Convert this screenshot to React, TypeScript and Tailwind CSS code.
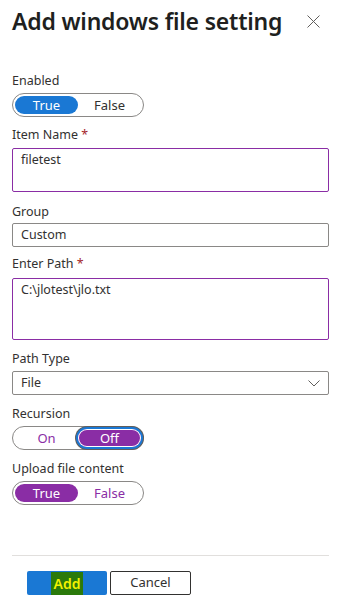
import React from "react";

const FONT = "font-['Noto_Sans',sans-serif]";

function Label({ text, required, className = "" }: { text: string; required?: boolean; className?: string }) {
  return (
    <div className={`text-[12.5px] leading-[18px] text-[#323130] ${className}`}>
      {text}
      {required && <span className="text-[#a4262c]"> *</span>}
    </div>
  );
}

function Toggle({
  left,
  right,
  active,
  tone,
  focused,
  className = "",
}: {
  left: string;
  right: string;
  active: "left" | "right";
  tone: "blue" | "purple";
  focused?: boolean;
  className?: string;
}) {
  const fill = tone === "blue" ? "bg-[#1a78d4]" : "bg-[#8a2da5]";
  const idle = tone === "blue" ? "text-[#323130]" : "text-[#8a2da5]";
  const pill = (label: string, on: boolean) => (
    <div
      className={`flex-1 h-[18px] rounded-full flex items-center justify-center text-[13px] leading-[18px] ${
        on ? `${fill} text-white` : idle
      } ${on && focused ? "shadow-[inset_0_0_0_1px_#ffffff,0_0_0_2px_#1a78d4,0_0_0_3px_#605e5c]" : ""}`}
    >
      {label}
    </div>
  );
  return (
    <div className={`w-[132px] h-[24px] rounded-full border border-[#8a8886] p-[2px] flex ${className}`}>
      {pill(left, active === "left")}
      {pill(right, active === "right")}
    </div>
  );
}

export default function App() {
  return (
    <div className={`w-[338px] h-[616px] bg-white ${FONT} pl-[12px] pr-[9px] flex flex-col`}>
      {/* Header */}
      <div className="flex items-start justify-between pt-[5px]">
        <h1 className="text-[23px] leading-[32px] font-semibold text-[#201f1e] tracking-[-0.2px]">
          Add windows file setting
        </h1>
        <svg width="13" height="13" viewBox="0 0 13 13" className="mt-[10px] mr-[9px]">
          <path d="M0.5 0.5 L12.5 12.5 M12.5 0.5 L0.5 12.5" stroke="#605e5c" strokeWidth="1" />
        </svg>
      </div>

      <Label text="Enabled" className="mt-[35px]" />
      <Toggle left="True" right="False" active="left" tone="blue" className="mt-[3px]" />

      <Label text="Item Name" required className="mt-[9px]" />
      <div className="mt-[4px] h-[44px] border border-[#8a2da5] rounded-[2px] px-[8px] pt-[2px] text-[12.5px] leading-[18px] text-[#323130]">
        filetest
      </div>

      <Label text="Group" className="mt-[11px]" />
      <div className="mt-[2px] h-[24px] border border-[#8a8886] rounded-[2px] px-[8px] flex items-center text-[12.5px] leading-[18px] text-[#323130]">
        Custom
      </div>

      <Label text="Enter Path" required className="mt-[8px]" />
      <div className="mt-[5px] h-[62px] border border-[#8a2da5] rounded-[2px] px-[8px] pt-[2px] text-[12.5px] leading-[18px] text-[#323130]">
        C:\jlotest\jlo.txt
      </div>

      <Label text="Path Type" className="mt-[10px]" />
      <div className="mt-[3px] h-[24px] border border-[#8a8886] rounded-[2px] pl-[8px] pr-[8px] flex items-center justify-between text-[12.5px] leading-[18px] text-[#323130]">
        <span>File</span>
        <svg width="12" height="7" viewBox="0 0 12 7">
          <path d="M0.5 0.5 L6 6 L11.5 0.5" fill="none" stroke="#605e5c" strokeWidth="1" />
        </svg>
      </div>

      <Label text="Recursion" className="mt-[10px]" />
      <Toggle left="On" right="Off" active="right" tone="purple" focused className="mt-[3px]" />

      <Label text="Upload file content" className="mt-[10px]" />
      <Toggle left="True" right="False" active="left" tone="purple" className="mt-[3px]" />

      {/* Footer */}
      <div className="mt-[50px] border-t border-[#e1dfdd]" />
      <div className="mt-[15px] pl-[15px] flex gap-[3px]">
        <button className="w-[80px] h-[24px] rounded-[2px] bg-[#1a78d4] flex items-center justify-center">
          <span className="bg-[#2b7a0b] text-[#f2f200] text-[14px] font-semibold leading-[23px] px-[3px]">Add</span>
        </button>
        <button className="w-[81px] h-[24px] rounded-[2px] border border-[#323130] bg-white text-[13px] text-[#323130] flex items-center justify-center">
          Cancel
        </button>
      </div>
    </div>
  );
}
